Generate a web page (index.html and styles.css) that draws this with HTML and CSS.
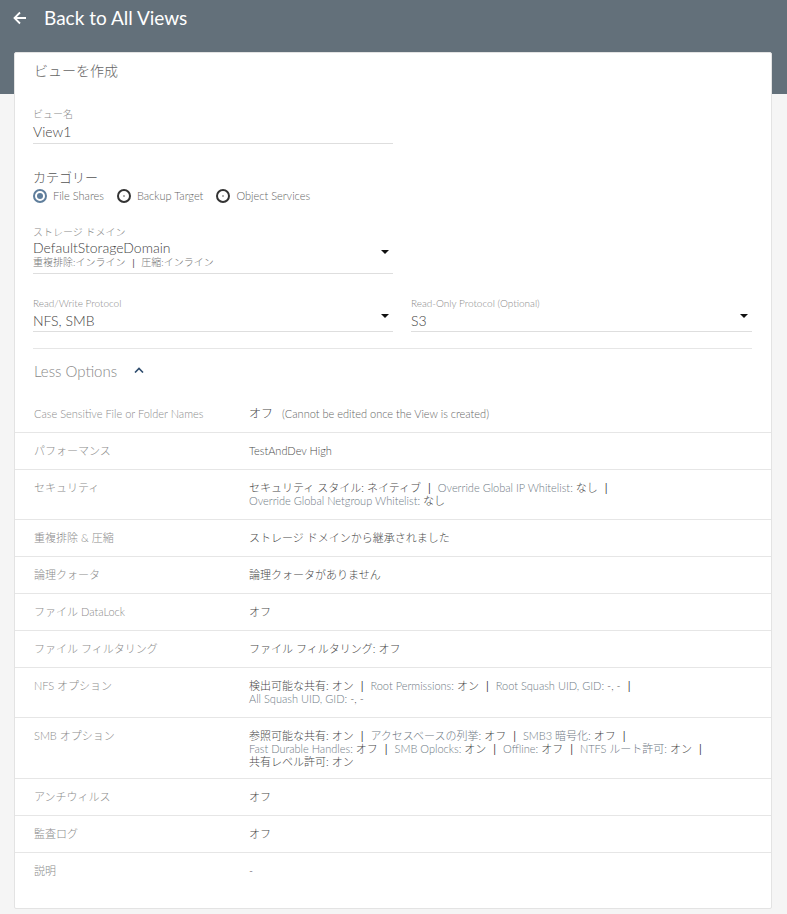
FILE: index.html
```html
<!DOCTYPE html>
<html lang="ja">
<head>
<meta charset="utf-8">
<title>ビューを作成</title>
<link rel="stylesheet" href="styles.css">
</head>
<body>
<header class="topbar">
  <div class="back">
    <svg class="back-arrow" width="14" height="14" viewBox="0 0 14 14"><path d="M13 7H2M7 1.5L1.5 7L7 12.5" fill="none" stroke="#fff" stroke-width="1.8"/></svg>
    <span class="back-text">Back to All Views</span>
  </div>
</header>
<main class="card">
  <div class="card-title">ビューを作成</div>
  <div class="form">
    <div class="field w360 f-name">
      <div class="f-label">ビュー名</div>
      <div class="f-value">View1</div>
    </div>
    <div class="category">
      <div class="cat-label">カテゴリー</div>
      <div class="radios">
        <span class="radio on"><span class="dot"></span>File Shares</span>
        <span class="radio"><span class="dot"></span>Backup Target</span>
        <span class="radio"><span class="dot"></span>Object Services</span>
      </div>
    </div>
    <div class="field w360 select f-domain">
      <div class="f-label">ストレージ ドメイン</div>
      <div class="f-value">DefaultStorageDomain</div>
      <div class="f-sub">重複排除:インライン <span class="bar">|</span> 圧縮:インライン</div>
      <span class="caret"></span>
    </div>
    <div class="proto">
      <div class="field select">
        <div class="f-label">Read/Write Protocol</div>
        <div class="f-value">NFS, SMB</div>
        <span class="caret"></span>
      </div>
      <div class="field select">
        <div class="f-label">Read-Only Protocol (Optional)</div>
        <div class="f-value">S3</div>
        <span class="caret"></span>
      </div>
    </div>
    <div class="less">
      <span>Less Options</span>
      <svg class="chev" width="10" height="6" viewBox="0 0 10 6"><path d="M1 5.5L5 1.5L9 5.5" fill="none" stroke="#2f4d6e" stroke-width="1.6"/></svg>
    </div>
  </div>
  <div class="rows">
    <div class="row"><div class="k">Case Sensitive File or Folder Names</div><div class="v"><span class="big">オフ</span>&nbsp;&nbsp; <span class="note">(Cannot be edited once the View is created)</span></div></div>
    <div class="row"><div class="k">パフォーマンス</div><div class="v">TestAndDev High</div></div>
    <div class="row"><div class="k">セキュリティ</div><div class="v">セキュリティ スタイル: ネイティブ <span class="bar">|</span> <span class="sk">Override Global IP Whitelist:</span> なし <span class="bar">|</span><br><span class="sk">Override Global Netgroup Whitelist:</span> なし</div></div>
    <div class="row"><div class="k">重複排除 &amp; 圧縮</div><div class="v">ストレージ ドメインから継承されました</div></div>
    <div class="row"><div class="k">論理クォータ</div><div class="v">論理クォータがありません</div></div>
    <div class="row"><div class="k">ファイル DataLock</div><div class="v">オフ</div></div>
    <div class="row"><div class="k">ファイル フィルタリング</div><div class="v">ファイル フィルタリング: オフ</div></div>
    <div class="row"><div class="k">NFS オプション</div><div class="v">検出可能な共有: オン <span class="bar">|</span> <span class="sk">Root Permissions:</span> オン <span class="bar">|</span> <span class="sk">Root Squash UID, GID:</span> -, - <span class="bar">|</span><br><span class="sk">All Squash UID, GID:</span> -, -</div></div>
    <div class="row tight"><div class="k">SMB オプション</div><div class="v">参照可能な共有: オン <span class="bar">|</span> <span class="sk">アクセスベースの列挙:</span> オフ <span class="bar">|</span> <span class="sk">SMB3 暗号化:</span> オフ <span class="bar">|</span><br><span class="sk">Fast Durable Handles:</span> オフ <span class="bar">|</span> <span class="sk">SMB Oplocks:</span> オン <span class="bar">|</span> <span class="sk">Offline:</span> オフ <span class="bar">|</span> <span class="sk">NTFS ルート許可:</span> オン <span class="bar">|</span><br>共有レベル許可: オン</div></div>
    <div class="row"><div class="k">アンチウィルス</div><div class="v">オフ</div></div>
    <div class="row"><div class="k">監査ログ</div><div class="v">オフ</div></div>
    <div class="row last"><div class="k">説明</div><div class="v">-</div></div>
  </div>
</main>
</body>
</html>
```

FILE: styles.css
```css
* { box-sizing: border-box; }
html, body { margin: 0; padding: 0; }
body {
  background: #f5f5f5;
  font-family: Lato, "Noto Sans CJK JP", sans-serif;
  font-weight: 300;
  color: #555;
  width: 787px;
  height: 914px;
  overflow: hidden;
}
.topbar {
  background: #63707a;
  height: 94px;
}
.back {
  display: flex;
  align-items: center;
  height: 36px;
  padding-left: 13px;
}
.back-arrow { display: block; }
.back-text {
  color: #fff;
  font-size: 19px;
  font-weight: 400;
  margin-left: 17px;
  line-height: 36px;
}
.card {
  margin: -42px 15px 0 14px;
  background: #fff;
  border: 1px solid #e3e3e3;
  border-radius: 2px;
  height: 857px;
}
.card-title {
  height: 41px;
  padding: 9px 0 0 19px;
  font-size: 14px;
  line-height: 18px;
  color: #666;
}
.form {
  padding: 13px 19px 0 18px;
}
.field {
  position: relative;
  border-bottom: 1px solid #dedede;
}
.w360 { width: 360px; }
.f-label {
  font-size: 10px;
  line-height: 14px;
  color: #8a8a8a;
}
.f-value {
  font-size: 14px;
  line-height: 21px;
  color: #444;
}
.f-name .f-value { padding-bottom: 1px; }
.f-sub {
  font-size: 10px;
  line-height: 12px;
  color: #777;
  padding-bottom: 5px;
}
.f-domain .f-value { line-height: 17px; }
.bar { color: #444; padding: 0 4px; font-weight: 400; }
.caret {
  position: absolute;
  right: 4px;
  top: 50%;
  width: 0;
  height: 0;
  border-left: 4px solid transparent;
  border-right: 4px solid transparent;
  border-top: 4px solid #111;
}
.f-domain .caret { top: 25px; }
.category { padding-top: 24px; }
.cat-label {
  font-size: 13px;
  line-height: 18px;
  color: #555;
}
.radios {
  display: flex;
  gap: 13px;
  font-size: 11px;
  line-height: 16px;
  color: #666;
  margin-top: 2px;
}
.radio {
  display: flex;
  align-items: center;
  gap: 6px;
}
.radio .dot {
  width: 14px;
  height: 14px;
  border-radius: 50%;
  border: 2px solid #333;
  display: flex;
  align-items: center;
  justify-content: center;
}
.radio .dot::after {
  content: "";
  width: 2px;
  height: 2px;
  border-radius: 50%;
  background: #999;
}
.radio.on .dot { border-color: #5f7e9c; }
.radio.on .dot::after { width: 6px; height: 6px; background: #5f7e9c; }
.f-domain { margin-top: 21px; }
.proto {
  display: grid;
  grid-template-columns: 360px 341px;
  column-gap: 18px;
  padding-top: 22px;
  padding-bottom: 16px;
  border-bottom: 1px solid #e6e6e6;
}
.proto .f-value { line-height: 21px; }
.less {
  display: flex;
  align-items: center;
  height: 44px;
  padding-left: 1px;
  font-size: 15px;
  font-weight: 300;
  color: #888;
}
.chev { margin-left: 17px; margin-top: -2px; }
.rows { margin-top: 3px; }
.row {
  display: flex;
  padding: 11px 0 12px 19px;
  border-bottom: 1px solid #e6e6e6;
  font-size: 11px;
  line-height: 13px;
}
.row.tight { padding-bottom: 10px; }
.row.last { border-bottom: none; height: 56px; }
.k { width: 215px; flex: none; color: #8c8c8c; }
.v { color: #4a4a4a; }
.sk { color: #6f7a85; }
.big { font-size: 12px; }
.note { color: #666; }
```
